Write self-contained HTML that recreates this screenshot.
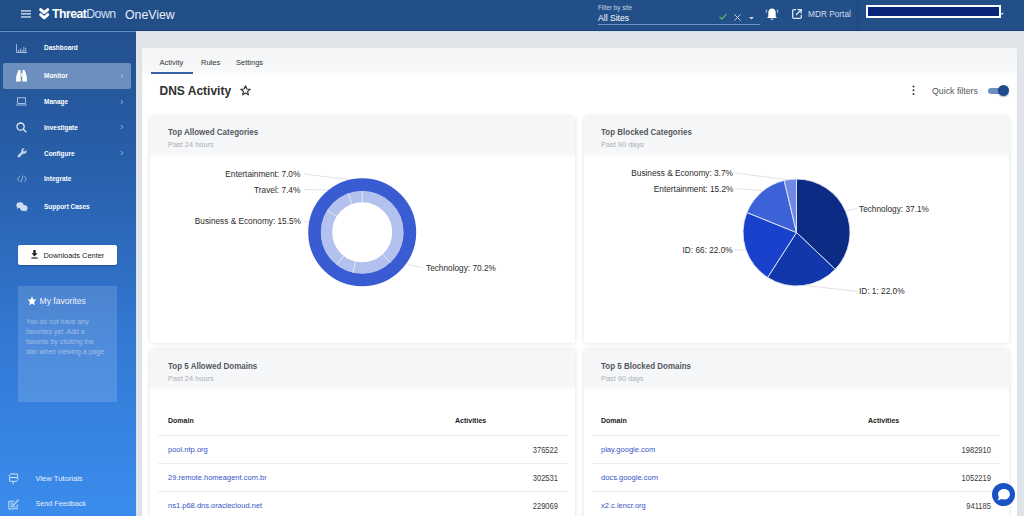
<!DOCTYPE html>
<html><head><meta charset="utf-8">
<style>
*{margin:0;padding:0;box-sizing:border-box;}
html,body{width:1024px;height:516px;overflow:hidden;font-family:"Liberation Sans",sans-serif;background:linear-gradient(180deg,#dfe3e9 0px,#e1e5ea 48px,#dee4ea 100%);position:relative;}
.a{position:absolute;white-space:nowrap;line-height:12px;}
svg{position:absolute;overflow:visible;}
#top{position:absolute;left:0;top:0;width:1024px;height:31px;background:#234f89;box-shadow:inset 0 -1px 0 #1c4375;}
#side{position:absolute;left:0;top:31px;width:136px;height:485px;background:linear-gradient(180deg,#23508f 0%,#2a64b2 35%,#337ad6 65%,#3b8cec 100%);}
#sline{position:absolute;left:0;top:30.5px;width:136px;height:1px;background:#5d90d2;}
.nav{color:#fff;font-weight:bold;font-size:7.2px;left:44px;transform:scaleX(0.9);transform-origin:0 50%;}
.chev{left:119px;color:#c9d6ea;font-size:8px;}
#cont{position:absolute;left:142px;top:47.5px;width:875px;height:469px;background:#fff;box-shadow:0 0 2px rgba(0,0,0,0.06);}
#tabs{position:absolute;left:142px;top:47.5px;width:875px;height:28px;background:linear-gradient(180deg,#f4f5f7 0%,#f7f8f9 80%,#fff 100%);}
.tab{font-size:7.5px;color:#333;}
.card{position:absolute;background:#fff;border-radius:4px;box-shadow:0 0 5px rgba(0,0,0,0.13);overflow:hidden;}
.chd{position:absolute;left:0;top:0;width:100%;height:41px;background:linear-gradient(180deg,#f5f6f8 0%,#f6f7f8 88%,#fff 100%);}
.ct{left:18px;top:9px;font-weight:bold;font-size:9px;color:#54585e;transform:scaleX(0.888);transform-origin:0 50%;}
.cs{left:18px;top:22px;font-size:8px;color:#acafb3;transform:scaleX(0.925);transform-origin:0 50%;}
.lbl{font-size:9.2px;color:#2a2a2a;transform:scaleX(0.9);transform-origin:0 50%;}
.lbr{transform-origin:100% 50%;}
.th{font-size:7.8px;font-weight:bold;color:#222;transform:scaleX(0.9);transform-origin:0 50%;margin-top:0.5px;}
.dom{font-size:8.1px;color:#3553c8;transform:scaleX(0.93);transform-origin:0 50%;margin-top:0.9px;}
.num{font-size:8.6px;color:#3a3a3a;text-align:right;transform:scaleX(0.88);transform-origin:100% 50%;margin-top:1px;}
.sep{position:absolute;height:1px;background:#eceef0;}
</style></head><body>
<div id="top"></div>
<div id="side"></div>
<div id="sline"></div>
<div style="position:absolute;left:136px;top:31px;width:888px;height:1px;background:#d3deee;"></div>
<div id="cont"></div>
<div id="tabs"></div>

<!-- header -->
<svg style="left:21px;top:10px" width="10" height="8" viewBox="0 0 10 8"><rect x="0" y="0.3" width="10" height="1.3" fill="#dce7f5"/><rect x="0" y="3.2" width="10" height="1.3" fill="#dce7f5"/><rect x="0" y="6.3" width="10" height="1.3" fill="#dce7f5"/></svg>
<svg style="left:0;top:0" width="60" height="30" viewBox="0 0 60 30"><path d="M40.6 9.6 L44.2 12.5 L47.8 9.6" stroke="#fff" stroke-width="2.9" stroke-linecap="round" stroke-linejoin="round" fill="none"/><path d="M40.6 14.6 L44.2 17.8 L47.8 14.6" stroke="#fff" stroke-width="2.9" stroke-linecap="round" stroke-linejoin="round" fill="none"/></svg>
<div class="a" id="logo" style="left:52px;top:8px;font-size:12.3px;color:#fff;letter-spacing:-0.55px;"><b>Threat</b><span style="color:#cfe0f8">Down</span></div>
<div class="a" id="oneview" style="left:125px;top:9px;font-size:12.3px;color:#e8eef8;">OneView</div>

<div class="a" style="left:598px;top:3.5px;font-size:6.3px;color:#c5d3e8;line-height:8px;">Filter by site</div>
<div class="a" id="allsites" style="left:598px;top:12px;font-size:8.6px;color:#fff;line-height:12px;">All Sites</div>
<div style="position:absolute;left:598px;top:24px;width:162px;height:1px;background:#6e93c4;"></div>
<svg style="left:719px;top:13px" width="8" height="7" viewBox="0 0 8 7"><path d="M0.5 3.8 L3 6 L7.5 0.8" stroke="#5cc46a" stroke-width="1.1" fill="none"/></svg>
<svg style="left:733.5px;top:13.5px" width="7" height="7" viewBox="0 0 7 7"><path d="M0.5 0.5 L6.5 6.5 M6.5 0.5 L0.5 6.5" stroke="#c8d4e6" stroke-width="1" fill="none"/></svg>
<svg style="left:749px;top:17px" width="5" height="3" viewBox="0 0 5 3"><path d="M0 0 L5 0 L2.5 2.6 Z" fill="#c8d4e6"/></svg>
<svg style="left:765px;top:8px" width="14" height="13" viewBox="0 0 14 13"><path d="M7 0.6 C4.7 0.6 3.3 2.4 3.3 4.8 L3.3 8.4 L2.1 10 L11.9 10 L10.7 8.4 L10.7 4.8 C10.7 2.4 9.3 0.6 7 0.6 Z" fill="#fff"/><path d="M5.8 10.6 L8.2 10.6 L8.2 11.6 L5.8 11.6 Z" fill="#fff"/><path d="M2 1.6 Q1 2.8 1.2 4.6 M12 1.6 Q13 2.8 12.8 4.6" stroke="#cfdcf0" stroke-width="1" fill="none"/></svg>
<svg style="left:792.4px;top:8.9px" width="10" height="10" viewBox="0 0 10 10"><path d="M4.2 0.7 L1.8 0.7 Q0.7 0.7 0.7 1.8 L0.7 8.2 Q0.7 9.3 1.8 9.3 L8.2 9.3 Q9.3 9.3 9.3 8.2 L9.3 5.8" stroke="#dce6f4" stroke-width="1.3" fill="none"/><path d="M5.6 0.7 L9.3 0.7 L9.3 4.4 M9.2 0.8 L4 6" stroke="#dce6f4" stroke-width="1.3" fill="none"/></svg>
<div class="a" id="mdr" style="left:808px;top:8px;font-size:8.3px;color:#d2ddef;">MDR Portal</div>
<div style="position:absolute;left:857px;top:0;width:1px;height:30px;background:#1d4680;"></div>
<div style="position:absolute;left:866px;top:5px;width:135px;height:13px;background:#fff;"></div>
<div style="position:absolute;left:868px;top:7px;width:131px;height:9px;background:#07267a;"></div>
<svg style="left:1000px;top:13px" width="4" height="3" viewBox="0 0 4 3"><path d="M0 0 L4 0 L2 2 Z" fill="#c8d4e6"/></svg>

<!-- sidebar --><div style="position:absolute;left:3px;top:63px;width:128px;height:26px;background:#6d8fbd;border-radius:2px;"></div>
<svg style="left:16px;top:44px" width="11" height="9" viewBox="0 0 11 9"><g stroke="#bcd0ea" stroke-width="0.8" fill="none"><path d="M0.5 0 L0.5 8.5 L11 8.5"/><path d="M2.5 8.5 L2.5 6 M4.3 8.5 L4.3 4.5 M6.1 8.5 L6.1 5.5 M7.9 8.5 L7.9 3 M9.7 8.5 L9.7 4"/></g></svg>
<svg style="left:16px;top:70px" width="11" height="12" viewBox="0 0 11 12"><path d="M2.2 0.6 Q2.4 0 3.2 0 L4.5 0 L4.8 11.5 L0.4 11.5 Q0 11.5 0 11 L0.3 6 Z" fill="#fff"/><path d="M8.8 0.6 Q8.6 0 7.8 0 L6.5 0 L6.2 11.5 L10.6 11.5 Q11 11.5 11 11 L10.7 6 Z" fill="#fff"/><rect x="4.5" y="3" width="2" height="4" fill="#dfe7f3"/></svg>
<svg style="left:16px;top:97px" width="11" height="9" viewBox="0 0 11 9"><g stroke="#c5d6ee" stroke-width="0.8" fill="none"><rect x="1.6" y="0.8" width="7.8" height="5.6"/><path d="M0 8 L11 8"/></g></svg>
<svg style="left:16px;top:122px" width="11" height="11" viewBox="0 0 11 11"><g stroke="#dbe6f6" stroke-width="1.3" fill="none"><circle cx="4.6" cy="4.6" r="3.6"/><path d="M7.3 7.3 L10.3 10.3"/></g></svg>
<svg style="left:16.5px;top:148px" width="10" height="10" viewBox="0 0 11 12"><path d="M10.5 2.4 L8.6 4.2 L7.2 3.8 L6.8 2.4 L8.6 0.6 C7 0 5.3 0.7 4.8 2.2 C4.5 3 4.6 3.7 4.9 4.4 L0.6 8.7 C0 9.3 0 10.3 0.6 10.9 C1.2 11.5 2.2 11.5 2.8 10.9 L7.1 6.6 C7.8 6.9 8.5 7 9.3 6.7 C10.8 6.2 11.5 4.5 10.5 2.4 Z" fill="#c3d5ef"/></svg>
<svg style="left:16.5px;top:175px" width="10" height="8" viewBox="0 0 10 8"><g stroke="#a9c1e6" stroke-width="0.8" fill="none"><path d="M2.6 1.2 L0.5 4 L2.6 6.8 M7.4 1.2 L9.5 4 L7.4 6.8 M6 0.5 L4 7.5"/></g></svg>
<svg style="left:16px;top:201.5px" width="12" height="10" viewBox="0 0 12 10"><ellipse cx="4" cy="3.2" rx="3.6" ry="2.9" fill="#cddcf1"/><path d="M1.5 5 L0.8 7 L3 5.8 Z" fill="#cddcf1"/><ellipse cx="7.8" cy="6" rx="3.8" ry="3" fill="#cddcf1"/><path d="M10 8 L11 9.8 L8.5 8.8 Z" fill="#cddcf1"/></svg>


<div class="a nav" id="n1" style="top:42px;">Dashboard</div>
<div class="a nav" id="n2" style="top:70px;">Monitor</div>
<svg style="left:119.8px;top:73.4px" width="4" height="6" viewBox="0 0 4 6"><path d="M0.9 1 L2.7 3 L0.9 5" stroke="#b5c8e4" stroke-width="0.8" fill="none"/></svg>
<div class="a nav" id="n3" style="top:95.5px;">Manage</div>
<svg style="left:119.8px;top:98.9px" width="4" height="6" viewBox="0 0 4 6"><path d="M0.9 1 L2.7 3 L0.9 5" stroke="#b5c8e4" stroke-width="0.8" fill="none"/></svg>
<div class="a nav" id="n4" style="top:121.7px;">Investigate</div>
<svg style="left:119.8px;top:124.4px" width="4" height="6" viewBox="0 0 4 6"><path d="M0.9 1 L2.7 3 L0.9 5" stroke="#b5c8e4" stroke-width="0.8" fill="none"/></svg>
<div class="a nav" id="n5" style="top:147.5px;">Configure</div>
<svg style="left:119.8px;top:150.4px" width="4" height="6" viewBox="0 0 4 6"><path d="M0.9 1 L2.7 3 L0.9 5" stroke="#b5c8e4" stroke-width="0.8" fill="none"/></svg>
<div class="a nav" id="n6" style="top:173px;">Integrate</div>
<div class="a nav" id="n7" style="top:200.5px;">Support Cases</div>

<div style="position:absolute;left:18px;top:245px;width:99px;height:20px;background:#fff;border-radius:2px;box-shadow:0 1px 1.5px rgba(0,0,0,0.25);"></div>
<svg style="left:31px;top:250px" width="7" height="9" viewBox="0 0 7 9"><path d="M2.3 0 L4.7 0 L4.7 3.2 L6.6 3.2 L3.5 6.4 L0.4 3.2 L2.3 3.2 Z" fill="#222"/><rect x="0.4" y="7.4" width="6.2" height="1.2" fill="#222"/></svg>
<div class="a" id="dlc" style="left:43.5px;top:249.7px;font-size:7.4px;color:#222;">Downloads Center</div>

<div style="position:absolute;left:18px;top:286px;width:99px;height:116px;background:rgba(255,255,255,0.14);"></div>
<svg style="left:27px;top:296px" width="10" height="10" viewBox="0 0 10 10"><path d="M5 0.3 L6.3 3.4 L9.6 3.6 L7.1 5.8 L7.9 9.2 L5 7.4 L2.1 9.2 L2.9 5.8 L0.4 3.6 L3.7 3.4 Z" fill="#fff"/></svg>
<div class="a" id="fav" style="left:39.5px;top:295px;font-size:8.6px;color:#eef3fb;">My favorites</div>
<div style="position:absolute;left:26px;top:317px;font-size:6.9px;line-height:10.1px;color:#a3bfe6;white-space:nowrap;">You do not have any<br>favorites yet. Add a<br>favorite by clicking the<br>star when viewing a page</div>

<svg style="left:7.5px;top:472.5px" width="11" height="12" viewBox="0 0 11 12"><g stroke="#d3e3f8" stroke-width="0.95" fill="none" stroke-linejoin="round"><path d="M2.6 1 L9.6 1 L9.6 4.5 L2.6 4.5 L0.9 2.75 Z"/><path d="M1.6 4.5 L8.4 4.5 L10.1 6.4 L8.4 8.3 L1.6 8.3 Z"/><path d="M5.2 0 L5.2 1 M5.2 8.3 L5.2 11.5"/></g></svg>
<div class="a" id="vt" style="left:35.5px;top:472.5px;font-size:7.6px;color:#e6f0fc;">View Tutorials</div>
<svg style="left:7.5px;top:498.5px" width="11" height="11" viewBox="0 0 11 11"><g stroke="#d3e3f8" stroke-width="0.9" fill="none"><path d="M6 2.2 L0.8 2.2 L0.8 9.8 L1.8 9.8 L1.8 10.8 L3 9.8 L9.2 9.8 L9.2 5.5"/><path d="M2.4 4.2 L5 4.2 M2.4 6 L5.5 6 M2.4 7.8 L7.5 7.8"/><path d="M5.2 6.3 L5.8 4.7 L10 0.6 L10.7 1.3 L6.6 5.6 Z"/></g></svg>
<div class="a" id="sf" style="left:35.5px;top:498px;font-size:7.2px;color:#e6f0fc;">Send Feedback</div>


<!-- main -->
<div class="a tab" id="t1" style="left:159.5px;top:57px;">Activity</div>
<div class="a tab" id="t2" style="left:201px;top:57px;">Rules</div>
<div class="a tab" id="t3" style="left:236px;top:57px;">Settings</div>
<div style="position:absolute;left:151px;top:72px;width:42px;height:1.6px;background:#3560ac;"></div>
<div class="a" id="dns" style="left:159.5px;top:83.5px;font-size:12px;font-weight:bold;color:#303030;line-height:14px;">DNS Activity</div>
<svg style="left:240px;top:84.5px" width="11" height="11" viewBox="0 0 11 11"><path d="M5.5 0.8 L6.85 4 L10.2 4.2 L7.6 6.4 L8.45 9.8 L5.5 7.9 L2.55 9.8 L3.4 6.4 L0.8 4.2 L4.15 4 Z" stroke="#333" stroke-width="1.15" fill="none" stroke-linejoin="round"/></svg>
<svg style="left:912px;top:85px" width="3" height="11" viewBox="0 0 3 11"><circle cx="1.5" cy="1.5" r="1" fill="#333"/><circle cx="1.5" cy="5.3" r="1" fill="#333"/><circle cx="1.5" cy="9.1" r="1" fill="#333"/></svg>
<div class="a" id="qf" style="left:932px;top:84.5px;font-size:8.8px;color:#555;">Quick filters</div>
<div style="position:absolute;left:988px;top:87.5px;width:19px;height:6px;border-radius:3px;background:#6d8ec0;"></div>
<div style="position:absolute;left:997.5px;top:85px;width:11px;height:11px;border-radius:50%;background:#1f4a8c;box-shadow:0 1px 1.5px rgba(0,0,0,0.3);"></div>

<!-- card 1 -->
<div class="card" style="left:150px;top:117px;width:425px;height:226px;">
  <div class="chd"></div>
  <div class="a ct" id="c1t">Top Allowed Categories</div>
  <div class="a cs" id="c1s">Past 24 hours</div>
</div>
<!-- card 2 -->
<div class="card" style="left:584px;top:117px;width:425px;height:226px;">
  <div class="chd"></div>
  <div class="a ct" id="c2t" style="left:17px">Top Blocked Categories</div>
  <div class="a cs" id="c2s" style="left:17px">Past 90 days</div>
</div>
<!-- card 3 -->
<div class="card" style="left:150px;top:350px;width:425px;height:180px;">
  <div class="chd"></div>
  <div class="a ct" id="c3t" style="top:10px">Top 5 Allowed Domains</div>
  <div class="a cs" id="c3s" style="top:23px">Past 24 hours</div>
</div>
<!-- card 4 -->
<div class="card" style="left:584px;top:350px;width:425px;height:180px;">
  <div class="chd"></div>
  <div class="a ct" id="c4t" style="top:10px;left:17px">Top 5 Blocked Domains</div>
  <div class="a cs" id="c4s" style="top:23px;left:17px">Past 90 days</div>
</div>

<!-- donut -->
<svg style="left:0;top:0" width="1024" height="516" viewBox="0 0 1024 516">
  <g stroke="#d4d4d4" stroke-width="0.7" fill="none">
    <path d="M304 174 L352 180"/>
    <path d="M304 189.5 L331 190"/>
    <path d="M304 221.5 L310 222"/>
    <path d="M407.5 264.5 L423 267.5"/>
  </g>
  <circle cx="362.2" cy="232.3" r="47.5" fill="none" stroke="#3a5cd2" stroke-width="13"/>
  <circle cx="362.2" cy="232.3" r="35.7" fill="none" stroke="#b3c1ee" stroke-width="11.4"/>
  <g stroke="#e9eefb" stroke-width="0.9" id="dsep"><path d="M362.20 202.30 L362.20 190.90"/><path d="M382.66 254.24 L390.43 262.58"/><path d="M355.45 261.53 L352.89 272.64"/><path d="M343.73 255.94 L336.71 264.92"/><path d="M336.76 216.40 L327.09 210.36"/><path d="M351.94 204.11 L348.04 193.40"/></g>
</svg>
<div class="a lbl lbr" style="right:723.4px;top:168px;">Entertainment: 7.0%</div>
<div class="a lbl lbr" style="right:723.4px;top:183.5px;">Travel: 7.4%</div>
<div class="a lbl lbr" style="right:723.4px;top:215px;">Business &amp; Economy: 15.5%</div>
<div class="a lbl" style="left:425.6px;top:261.7px;">Technology: 70.2%</div>

<!-- pie -->
<svg style="left:0;top:0" width="1024" height="516" viewBox="0 0 1024 516" id="pie">
  <g stroke="#d4d4d4" stroke-width="0.7" fill="none">
    <path d="M735 173 L790 180"/>
    <path d="M735 188.5 L763 190.5"/>
    <path d="M735 250 L744 250"/>
    <path d="M845 211 L857 208.5"/>
    <path d="M805 285.5 L857 291.3"/>
  </g>
  <g id="slices" stroke="#e3e9f8" stroke-width="0.9" stroke-linejoin="round"><path d="M796.5 232.5 L796.50 179.00 A53.5 53.5 0 0 1 835.27 269.37 Z" fill="#0c2b84"/><path d="M796.5 232.5 L835.27 269.37 A53.5 53.5 0 0 1 767.55 277.49 Z" fill="#1237ab"/><path d="M796.5 232.5 L767.55 277.49 A53.5 53.5 0 0 1 746.88 212.49 Z" fill="#1a41cc"/><path d="M796.5 232.5 L746.88 212.49 A53.5 53.5 0 0 1 784.17 180.44 Z" fill="#3d62d8"/><path d="M796.5 232.5 L784.17 180.44 A53.5 53.5 0 0 1 796.50 179.00 Z" fill="#6f89e4"/></g>
</svg>
<div class="a lbl lbr" style="right:291px;top:167.2px;">Business &amp; Economy: 3.7%</div>
<div class="a lbl lbr" style="right:291px;top:182.5px;">Entertainment: 15.2%</div>
<div class="a lbl lbr" style="right:291px;top:244px;">ID: 66: 22.0%</div>
<div class="a lbl" style="left:858.8px;top:202.8px;">Technology: 37.1%</div>
<div class="a lbl" style="left:858.8px;top:284.9px;">ID: 1: 22.0%</div>

<!-- table 1 -->
<div class="a th" style="left:167.8px;top:414px;">Domain</div>
<div class="a th" style="left:455px;top:414px;">Activities</div>
<div class="sep" style="left:158px;top:435px;width:410px;"></div>
<div class="a dom" style="left:167.8px;top:443px;">pool.ntp.org</div>
<div class="a num" style="left:508px;top:443px;width:50px;">376522</div>
<div class="sep" style="left:158px;top:463px;width:410px;"></div>
<div class="a dom" style="left:167.8px;top:471px;">29.remote.homeagent.com.br</div>
<div class="a num" style="left:508px;top:471px;width:50px;">302531</div>
<div class="sep" style="left:158px;top:491px;width:410px;"></div>
<div class="a dom" style="left:167.8px;top:499px;">ns1.p68.dns.oraclecloud.net</div>
<div class="a num" style="left:508px;top:499px;width:50px;">229069</div>

<!-- table 2 -->
<div class="a th" style="left:601px;top:414px;">Domain</div>
<div class="a th" style="left:868px;top:414px;">Activities</div>
<div class="sep" style="left:592px;top:435px;width:408px;"></div>
<div class="a dom" style="left:601px;top:443px;">play.google.com</div>
<div class="a num" style="left:941px;top:443px;width:50px;">1982910</div>
<div class="sep" style="left:592px;top:463px;width:408px;"></div>
<div class="a dom" style="left:601px;top:471px;">docs.google.com</div>
<div class="a num" style="left:941px;top:471px;width:50px;">1052219</div>
<div class="sep" style="left:592px;top:491px;width:408px;"></div>
<div class="a dom" style="left:601px;top:499px;">x2.c.lencr.org</div>
<div class="a num" style="left:941px;top:499px;width:50px;">941185</div>

<!-- chat -->
<div style="position:absolute;left:992px;top:482.7px;width:23.4px;height:23.4px;border-radius:50%;background:#1852c4;"></div>
<svg style="left:996px;top:487px" width="16" height="16" viewBox="0 0 16 16"><path d="M8 1.9 C11.4 1.9 13.9 4.2 13.9 7.2 C13.9 10.2 11.4 12.6 8 12.6 C7.1 12.6 6.3 12.4 5.6 12.1 L1.7 13.6 L2.9 10.6 C2.4 9.6 2.1 8.5 2.1 7.2 C2.1 4.2 4.6 1.9 8 1.9 Z" fill="#fff"/></svg>

</body></html>
